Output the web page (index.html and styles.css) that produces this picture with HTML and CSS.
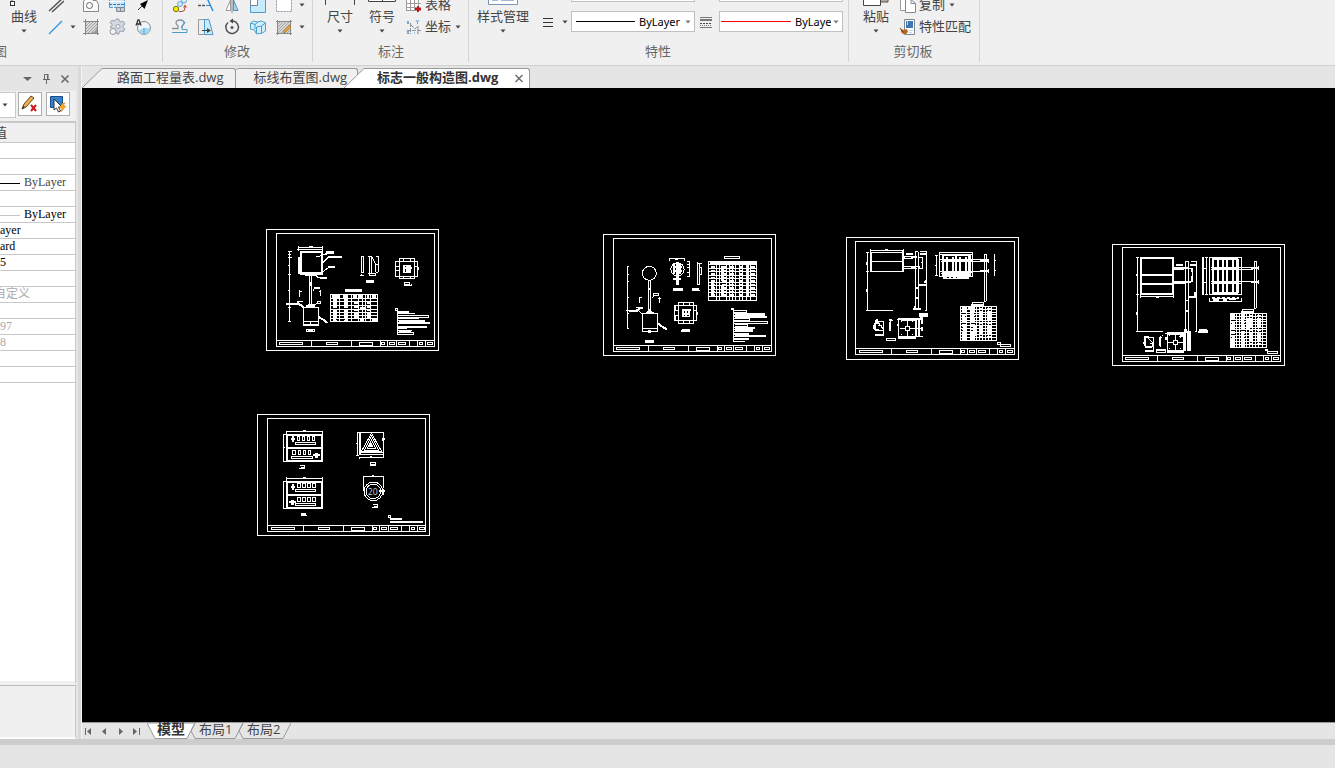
FILE: index.html
```html
<!DOCTYPE html>
<html lang="zh-CN">
<head>
  <meta charset="UTF-8" />
  <meta name="viewport" content="width=device-width, initial-scale=1.0"/>
  <title>标志一般构造图.dwg</title>
  <link rel="stylesheet" href="styles.css">
</head>
<body>
  <!-- shared symbols -->
  <svg class="defs" width="0" height="0" aria-hidden="true">
    <symbol id="caret" viewBox="0 0 10 10"><path d="M2.5 3.5h5L5 6.5z" fill="currentColor"/></symbol>
    <symbol id="title-block" viewBox="18 21 519 366">
      <path d="M49 355.5H523M154.5 355V373M274.5 355V373M361.5 355V373M382.5 355V373M409.5 355V373M448.5 355V373M472.5 355V373M496.5 355V373"/>
      <path d="M58.5 361.5h69v6h-69zM199.5 361.5h33v6h-33zM298.5 361.5h39v9h-39zM364.5 361.5h9v6h-9zM388.5 361.5h15v6h-15zM415.5 361.5h21v6h-21zM478.5 361.5h9v6h-9zM502.5 361.5h15v6h-15z"/>
    </symbol>
    <pattern id="hatch" width="3" height="3" patternUnits="userSpaceOnUse"><rect width="3" height="3" fill="#d8d8d8"/><path d="M0 3L3 0" stroke="#a4a4a4"/></pattern>
  </svg>

  <header class="ribbon">
    <section class="group group-draw">
      <div class="tools">
        <button class="big">
          <svg class="icon-big" viewBox="0 0 32 32"><path d="M4 12v14" stroke="#555"/><rect x="2.5" y="26.5" width="4" height="4" fill="#fff" stroke="#333"/></svg>
          <span>曲线</span>
          <svg class="caret"><use href="#caret"/></svg>
        </button>
        <div class="icon-grid draw-grid">
          <button class="cell" aria-label="多线"><svg class="icon" viewBox="0 0 18 18"><path d="M3 15L17 2M6 16L18 5" stroke="#555" stroke-width="1.5"/></svg></button>
          <span></span>
          <button class="cell" aria-label="面域"><svg class="icon" viewBox="0 0 18 18"><path d="M1.5 15.5V5L7 .5l4 4h3.5l2 4v7z" fill="#fafafa" stroke="#888"/><circle cx="7.5" cy="9.5" r="3" fill="#fff" stroke="#666"/></svg></button>
          <button class="cell" aria-label="图层块"><svg class="icon" viewBox="0 0 18 18"><path d="M1.5 1.5h15v10h-15z" fill="#cfe5f5" stroke="#5b9bcb"/><path d="M1 5.5h16M5.5 1v11" stroke="#fff"/><path d="M1 8.5h16" stroke="#2c7fc4" stroke-dasharray="3 1"/><path d="M8.5 11.5h8v4h-8z" fill="#c9ccd2" stroke="#818894"/><path d="M12.5 11v5" stroke="#818894"/></svg></button>
          <button class="cell" aria-label="箭头"><svg class="icon" viewBox="0 0 18 18"><path d="M4 14l5-5" stroke="#333"/><path d="M14 4L6 8l4.5 5z" fill="#000"/></svg></button>
          <button class="cell" aria-label="构造线"><svg class="icon" viewBox="0 0 18 18"><path d="M3 16L16 3" stroke="#2797e2" stroke-width="1.3"/></svg></button>
          <button class="drop" aria-label="更多构造线"><svg class="caret"><use href="#caret"/></svg></button>
          <button class="cell" aria-label="填充"><svg class="icon" viewBox="0 0 18 18"><rect x="4" y="4" width="11" height="11" fill="url(#hatch)"/><path d="M1 3.5h16M1 15.5h16M3.5 1v16M15.5 1v16" stroke="#888"/><path d="M15 9q-1 5-6 6h6z" fill="#999"/></svg></button>
          <button class="cell" aria-label="块">
            <svg class="icon" viewBox="0 0 18 18"><path d="M8 1h3v2l2 1 2-1 2 3-2 1.5v2l2 1.5-2 3-2-1-2 1v2H9L7 12 2 9l2-1.5V6L2 4.5 4 2l2 1 2-1z" fill="#d3d7df" stroke="#9ba1ac"/><circle cx="10" cy="8.5" r="2" fill="#f5f5f5" stroke="#9ba1ac"/><circle cx="5" cy="13.5" r="3" fill="#f5f5f5" stroke="#8f97a5"/></svg>
          </button>
          <button class="cell" aria-label="注释圆"><svg class="icon" viewBox="0 0 18 18"><circle cx="10" cy="10" r="6.5" fill="#eef6fb" stroke="#888"/><path d="M10 10h6.5q-1 6-6.5 6.5-4-.5-5.500-4z" fill="#a7d8f2"/><path d="M10 10v6" stroke="#5f9dc0"/><path d="M2 7.5L4 2h1l2 5.5M3 6h3" stroke="#333" stroke-width="1.3"/></svg></button>
        </div>
      </div>
      <h2 class="caption">图</h2>
    </section>

    <section class="group group-modify">
      <div class="tools">
        <div class="icon-grid modify-grid">
          <button class="cell" aria-label="复制对象"><svg class="icon" viewBox="0 0 18 18"><circle cx="5" cy="13" r="2.7" fill="#ffe600" stroke="#777a22"/><circle cx="9" cy="8" r="2.5" fill="#d6edf9" stroke="#5fa7d5"/><circle cx="13" cy="4.5" r="2.5" fill="#d6edf9" stroke="#5fa7d5"/><path d="M8 15.5h3q3 0 3-4" stroke="#a94f3b"/><path d="M12 11.5l2-3 2 3z" fill="#d6412d"/></svg></button>
          <button class="cell" aria-label="修剪"><svg class="icon" viewBox="0 0 18 18"><path d="M10 2l6 13" stroke="#2988d4" stroke-width="1.4"/><path d="M1 9.5h3m1 0h3" stroke="#555" stroke-width="1.5"/><path d="M9 9.5h4" stroke="#2988d4"/></svg></button>
          <button class="cell" aria-label="镜像"><svg class="icon" viewBox="0 0 18 18"><path d="M3 14.5L7.5 4v10.5z" fill="#fff" stroke="#999"/><path d="M15 14.5L10.5 4v10.5z" fill="#a7d8f2" stroke="#478fbe"/><path d="M9 1v16" stroke="#888"/></svg></button>
          <button class="cell" aria-label="缩放"><svg class="icon" viewBox="0 0 18 18"><path d="M1.5 1.5h15v15h-15z" fill="#c8eafb" stroke="#4c9ccc"/><path d="M1.5 2.5h7v7h-7z" fill="#fff" stroke="#7b8491"/></svg></button>
          <button class="cell" aria-label="拉伸"><svg class="icon" viewBox="0 0 18 18"><path d="M1.5.5h15v15h-15z" fill="#fff" stroke="#8a97a3" stroke-dasharray="2 1"/></svg></button>
          <button class="drop" aria-label="更多拉伸"><svg class="caret"><use href="#caret"/></svg></button>
          <button class="cell" aria-label="偏移"><svg class="icon" viewBox="0 0 18 18"><path d="M1 10.5h6V8Q5 6 5 5q0-3 4-3t4 3q0 1-2 3v2" stroke="#8794a2" stroke-width="1.3"/><path d="M1 14.5h15v-3h-5V8q3-2 3-4" stroke="#4c9ccc"/></svg></button>
          <button class="cell" aria-label="拉长"><svg class="icon" viewBox="0 0 18 18"><path d="M1.5 1.5h6v15h-6z" fill="#ededed" stroke="#999"/><path d="M7.5 1.5H12l4 15H7.5z" fill="#c8eafb" stroke="#4c9ccc"/><path d="M5 12.5h7" stroke="#444"/><path d="M10 10l4 2.5-4 2.5z" fill="#444"/></svg></button>
          <button class="cell" aria-label="旋转"><svg class="icon" viewBox="0 0 18 18"><path d="M5 4.5a6.3 6.3 0 1 0 5-1.500" stroke="#4e535a" stroke-width="1.5"/><path d="M10 .5v5L6.5 3z" fill="#444"/><circle cx="9" cy="9.5" r="1.5" fill="#555"/></svg></button>
          <button class="cell" aria-label="阵列"><svg class="icon" viewBox="0 0 18 18"><path d="M1.5 5l3-2 4 1 4-1 4 2v8l-3 2-6 1-2-4-4-1z" fill="#d4effc" stroke="#4c9ccc"/><path d="M2 5l4 1.5L9 4M6 6v5M7.5 9l5-1 4-3M12.5 8v7M7.5 9v6" stroke="#4c9ccc"/></svg></button>
          <button class="cell" aria-label="编辑填充"><svg class="icon" viewBox="0 0 18 18"><rect x="3" y="4" width="12" height="11" fill="url(#hatch)"/><path d="M1 3.5h16M1 15.5h16M2.5 2v15M15.5 2v15" stroke="#888"/><path d="M9 13l5-6 2 2-5 5-3 1z" fill="#e5a13a" stroke="#946728" stroke-width=".5"/></svg></button>
          <button class="drop" aria-label="更多填充"><svg class="caret"><use href="#caret"/></svg></button>
        </div>
      </div>
      <h2 class="caption">修改</h2>
    </section>

    <section class="group group-annotate">
      <div class="tools">
        <button class="big">
          <svg class="icon-big" viewBox="0 0 32 32"><path d="M1.5 30V20M30.5 30V20M1 24.5h30" stroke="#444"/></svg>
          <span>尺寸</span>
          <svg class="caret"><use href="#caret"/></svg>
        </button>
        <button class="big">
          <svg class="icon-big" viewBox="0 0 32 32"><path d="M2.5 12.5h27v14h-27zM16.5 12v14" fill="#fff" stroke="#444"/></svg>
          <span>符号</span>
          <svg class="caret"><use href="#caret"/></svg>
        </button>
        <div class="stack">
          <button class="small">
            <svg class="icon" viewBox="0 0 18 18"><path d="M1.5 2.5h14v12h-14z" fill="#fff"/><path d="M1.5 2v13M5.5 2v13M9.5 2v13M13.5 2v13M1 3.5h15M1 7.5h15M1 11.5h15M1 14.5h15" stroke="#a09a9a"/><path d="M13 10v6M10 13h6" stroke="#c51919" stroke-width="2"/></svg>
            <span>表格</span>
          </button>
          <button class="small">
            <svg class="icon" viewBox="0 0 18 18"><path d="M5.5 5v11M2 12.5h14M6 7l4 4 3-3v8" stroke="#8d959c" stroke-dasharray="4 1"/><path d="M2 3l2 3M4 3L2 6M11 2l1.5 2L14 2m-1.5 2v2M2 13l2 3M4 13l-2 3M9 15h1m2 0h1" stroke="#5fa1d6"/></svg>
            <span>坐标</span>
            <svg class="caret"><use href="#caret"/></svg>
          </button>
        </div>
      </div>
      <h2 class="caption">标注</h2>
    </section>

    <section class="group group-props">
      <div class="tools">
        <button class="big wide">
          <svg class="icon-big" viewBox="0 0 32 32"><path d="M1.5 8.5h29v21h-29z" fill="#fff" stroke="#7b94b5"/><path d="M5 24.5h6M14 24.5h13" stroke="#a9b8d2" stroke-width="3"/></svg>
          <span>样式管理</span>
          <svg class="caret"><use href="#caret"/></svg>
        </button>
        <button class="linetype" aria-label="线型">
          <svg class="icon" viewBox="0 0 18 18"><path d="M4 5.5h10M4 9.5h10M4 13.5h10" stroke="#333"/></svg>
          <svg class="caret"><use href="#caret"/></svg>
        </button>
        <div class="combos">
          <div class="combo"></div>
          <div class="combo">
            <span class="sample"></span>
            <select aria-label="线型选择"><option>ByLayer</option></select>
            <svg class="caret"><use href="#caret"/></svg>
          </div>
        </div>
        <button class="lineweight" aria-label="线宽">
          <svg class="icon" viewBox="0 0 18 18"><path d="M3 4.5h12M3 14.5h12" stroke="#777"/><path d="M3 7h12" stroke="#777" stroke-width="2"/><path d="M3 10.5h12" stroke="#444" stroke-dasharray="2 1"/><path d="M3 12.5h12" stroke="#777" stroke-dasharray="1 1"/></svg>
        </button>
        <div class="combos">
          <div class="combo"></div>
          <div class="combo">
            <span class="sample red"></span>
            <select aria-label="颜色选择"><option>ByLayer</option></select>
            <svg class="caret"><use href="#caret"/></svg>
          </div>
        </div>
      </div>
      <h2 class="caption">特性</h2>
    </section>

    <section class="group group-clip">
      <div class="tools">
        <button class="big">
          <svg class="icon-big" viewBox="0 0 32 32"><path d="M20 12h8v15h-8z" fill="#bba997" stroke="#555"/><path d="M3.5 12.5h17v18h-17z" fill="#fff" stroke="#444"/></svg>
          <span>粘贴</span>
          <svg class="caret"><use href="#caret"/></svg>
        </button>
        <div class="stack">
          <button class="small">
            <svg class="icon" viewBox="0 0 18 18"><path d="M1.5.5h7l3 3v11h-10z" fill="#fff" stroke="#999"/><path d="M6.5 3.5H12l4.5 4v9h-10z" fill="#fff" stroke="#888"/><path d="M12 3.5v4h4.5" stroke="#888"/></svg>
            <span>复制</span>
            <svg class="caret"><use href="#caret"/></svg>
          </button>
          <button class="small">
            <svg class="icon" viewBox="0 0 18 18"><path d="M5.5 1.5h10v15h-10z" fill="#fff" stroke="#7c8794"/><rect x="7" y="3" width="7" height="7" fill="#3f77ae"/><path d="M8.5 3v4M10 12.5h4M10 14.5h3" stroke="#bcd2e6"/><path d="M2 11l3 1 3-1 1 3-2 2-3 0-2-2z" fill="#b5671c"/><path d="M1 10l3 4" stroke="#74401a"/></svg>
            <span>特性匹配</span>
          </button>
        </div>
      </div>
      <h2 class="caption">剪切板</h2>
    </section>
  </header>

  <main class="workspace">
    <aside class="panel">
      <div class="panel-head">
        <button aria-label="菜单"><svg class="mini" viewBox="0 0 12 12"><path d="M2 4h9L6.5 8z" fill="#666"/></svg></button>
        <button aria-label="固定"><svg class="mini" viewBox="0 0 12 12"><path d="M4.5 6V1.5h3V6M8 1v5M3 6.5h7M6.5 7v4" stroke="#666"/></svg></button>
        <button aria-label="关闭"><svg class="mini" viewBox="0 0 12 12"><path d="M2.5 2.5l7 7M9.5 2.5l-7 7" stroke="#666" stroke-width="1.5"/></svg></button>
      </div>
      <div class="panel-tools">
        <button class="pick" aria-label="选择对象"><svg class="caret"><use href="#caret"/></svg></button>
        <button class="tool" aria-label="取消选择">
          <svg viewBox="0 0 22 22"><path d="M3 16L5 11 12 3l3 2-8 9z" fill="#f0b04c" stroke="#614520"/><path d="M3 16l1-3 2 1z" fill="#333"/><path d="M12 12l5 6M17 12l-5 6" stroke="#d0181e" stroke-width="2"/></svg>
        </button>
        <button class="tool" aria-label="快速选择">
          <svg viewBox="0 0 22 22"><path d="M3.5 3.5h12v11h-12z" fill="#2f82ce" stroke="#1d4c83"/><path d="M7 6v11l2.5-2 2 4 2-1-2-4H15z" fill="#fff" stroke="#333"/><path d="M16 10l-4 5h3l-1 4 5-6h-3l2-3z" fill="#ffac24" stroke="#d8720b" stroke-width=".5"/></svg>
        </button>
      </div>
      <table class="props">
        <thead><tr><th>值</th></tr></thead>
        <tbody>
          <tr><td></td></tr>
          <tr><td></td></tr>
          <tr><td class="dim"><span class="rule"></span>ByLayer</td></tr>
          <tr><td></td></tr>
          <tr><td><span class="rule light"></span>ByLayer</td></tr>
          <tr><td>ayer</td></tr>
          <tr><td>ard</td></tr>
          <tr><td>5</td></tr>
          <tr><td></td></tr>
          <tr><td class="off cut">自定义</td></tr>
          <tr><td></td></tr>
          <tr><td class="off">97</td></tr>
          <tr><td class="off">8</td></tr>
          <tr><td></td></tr>
          <tr><td></td></tr>
        </tbody>
      </table>
      <div class="props-space"></div>
      <div class="props-help"></div>
    </aside>

    <section class="document">
      <nav class="file-tabs">
        <button class="file-tab first"><svg class="slant" viewBox="0 0 20 20"><path d="M0 20L20 .5V20z" fill="#f0f0f0"/><path d="M0 20L20 .5" stroke="#999"/></svg><span>路面工程量表.dwg</span></button>
        <button class="file-tab second"><span>标线布置图.dwg</span></button>
        <div class="file-tab active"><svg class="slant" viewBox="0 0 20 20"><path d="M0 20L20 .5V20z" fill="#fff"/><path d="M0 20L20 .5" stroke="#999"/></svg><span>标志一般构造图.dwg<button class="close" aria-label="关闭标签"><svg class="mini" viewBox="0 0 12 12"><path d="M2.5 4l7 7M9.5 4l-7 7" stroke="#666" stroke-width="1.3"/></svg></button></span></div>
      </nav>

      <div class="canvas">
        <!-- single post, square sign -->
        <svg class="sheet sheet-1" viewBox="18 21 519 366">
          <path d="M19.5 22.5H535.5V385.5H19.5zM49.5 34.5H523.5V373.5H49.5z"/>
          <use href="#title-block" x="18" y="21" width="519" height="366"/>
          <path d="M88.5 88V298M84 88.5h12M84 97.5h9M84 106.5h12M84 130.5h6M84 157.5h9M84 205.5h6M84 255.5h9M84 298.5h9"/>
          <path d="M115.5 72V88M187.5 72V88M115 76.5h72M111 82.5h78M146 73.5h12"/>
          <path class="thick" d="M122 88V156H186V91H120M117 106V157M187 106V157M114 154h74"/>
          <path d="M135 160.5h36M147.5 157V250M154.5 157V250M169 103.5h9l12-6h12M196 94.5h27M199 88.5h21v4h-21zM189 121.5l15-15M190 148.5l15-12M168 163.5l15 5h18M159 205.5l6-9h12"/>
          <path class="thick" d="M205 105h40M204 135h20M184 168h16M163 198h16M150 180v12M144 249h15M147 253h16"/>
          <path d="M118.5 205V226M121 208h6M181.5 205V223M177 208h6M112 238.5h18M112 241h6M172 238.5h10v6h-10zM160 249l12-5"/>
          <path class="thick" d="M79 246h36l9 4 6 7M138 253h27M176 285l15 9 12 9"/>
          <path d="M130.5 256.5h45V310.5h-45zM130 298.5h45M130 307.5h45M151.5 298V309M139.5 322.5h24v6h-24zM145 325.5h14"/>
          <path d="M304.5 103.5h6v48h-6zM301 160.5h12M304 154.5v6M328.5 103V162M325 103.5h12M333.5 103V154M334 103l12 21v27M355.5 103V151M349 103.5h6M349 127h6M349 151h6M325 154.5h24M331 160.5h15v-6"/>
          <path class="fill" d="M318 174h24v9h-24zM255 201h51v9h-51z"/>
          <path d="M418.5 109.5h45V169.5h-45zM406.5 118.5h66V163.5h-66zM406 133.5h12M406 145.5h12M463 133.5h12M475.5 136v9M430 109v9M451 109v9M430 163v9M451 163v9M430.5 130.5h21v21h-21z"/>
          <path class="thick" d="M432 132v18M440 130v20M448 130v16M433 139h24M438 148h12"/>
          <path d="M433.5 181.5h15v6h-15zM433 190.5h22v-6"/>
          <path d="M211.5 217.5h141v81h-141zM211 229.5h141M211 238.5h141M211 250.5h141M211 262.5h141M211 271.5h141M211 280.5h141M211 289.5h141M238.5 217V298M274.5 217V298M295.5 217V298M307.5 217V298M316.5 217V298M331.5 217V298"/>
          <path class="bar" d="M216 223.5h20M250 223.5h14M280 223.5h12M298 223.5h12M322 223.5h6M337 223.5h12"/>
          <path class="bar dash" d="M223.5 232V298M256.5 232V298M286.5 239V292M325.5 239V292"/>
          <path class="bar" d="M222 265v33M258 262v34M300 259h14M300 294h12M336 294h15"/>
          <path d="M406.5 259.5h6v6h-6zM412.5 265V336M412 268.5h36M412 274.5h54M412 280.5h94v6h-94zM412 289.5h66M412 295.5h84M412 301.5h97v4h-97zM412 313.5h90M412 319.5h30M412 325.5h45M412 331.5h48v6h-48z"/>
          <path class="thick" d="M415 270h33M416 297h78M412 304h96M415 315h87M416 328h38"/>
        </svg>

        <!-- single post, round sign -->
        <svg class="sheet sheet-2" viewBox="18 21 519 366">
          <path d="M19.5 22.5H535.5V385.5H19.5zM49.5 34.5H523.5V373.5H49.5z"/>
          <use href="#title-block" x="18" y="21" width="519" height="366"/>
          <path d="M91.5 118V304M91 118.5h6M91 142.5h4M91 163.5h6M91 211.5h4M91 259.5h6M91 304.5h6"/>
          <circle cx="157" cy="139" r="21"/>
          <path d="M153.5 160V251M160.5 160V251M166 211.5l6-6M169.5 199.5h15v6h-15zM127.5 211V229M127 212h7M187.5 211V229M184 214h7M118 241.5h18M118 247h6M88 250.5h36l12 12M147 256.5h24"/>
          <path class="thick" d="M147 259h24M150 254h15M157 247v9M157 184v6M182 289l12 9 15 9M97 252h24l6-8h10"/>
          <path d="M136.5 259.5h45V313.5h-45zM136 304.5h45M154.5 310.5h6v6h-6z"/>
          <path class="fill" d="M144 339h27v9h-27zM228 183h30v9h-30zM285 183h21l3 9h-24z"/>
          <path d="M217.5 94V103M262.5 94V103M217 94.5h46M235 97.5h9"/>
          <circle cx="241.5" cy="127" r="20"/>
          <path class="thick" d="M230 120h24M229 132h25M232 108v34M250 108v34M228 157h24"/>
          <path class="bar" d="M241 109v64"/>
          <path d="M271 103.5h7M277.5 103V151M271 112.5h7M271 121.5h7M271 136.5h7M271 148.5h7M301.5 103.5V171.5M307.5 109V171M301 109.5h15M307 121.5h6v21h-6M301 172.5h9"/>
          <path d="M244.5 226.5h45V289.5h-45zM232.5 235.5h66V280.5h-66zM232 250h12M232 266h12M235 238v12M235 268v12M289 250h12M300.5 256v9M259 226v9M277 226v9M259 280v9M277 280v9M256.5 247.5h21v21h-21z"/>
          <path class="thick" d="M258 249v18M267 247v22M275 247v18M258 250h24M258 260h18"/>
          <path class="fill" d="M255 306h24v9h-27z"/>
          <path d="M382.5 88.5h45v6h-45z"/>
          <path d="M334.5 103.5h144v117h-144zM334 112.5h144M334 124.5h144M334 133.5h144M334 145.5h144M334 154.5h144M334 166.5h144M334 175.5h144M334 187.5h144M334 196.5h144M334 208.5h144M358.5 103V220M367.5 103V220M388.5 103V220M397.5 103V220M406.5 103V220M415.5 103V220M427.5 103V220M436.5 103V220M448.5 103V220M460.5 103V220"/>
          <path class="bar dash" d="M346.5 109V210M379.5 109V210M403.5 109V206M430.5 109V206M468 109V206"/>
          <path class="bar" d="M345 160v48M376 118v44M376 178v30M451 112v94M340 106.5h138"/>
          <path class="fill" d="M402 243h9v6h-9z"/>
          <path d="M409.5 244V346M409 250.5h39v6h-39M409 259.5h93v6h-93M409 268.5h98M409 274.5h48v6h-48M409 283.5h102v6h-102M415 292.5h36v6h-36M409 301.5h66M409 307.5h57v6h-57M409 319.5h45v4h-45M409 328.5h96M409 334.5h45v3h-45M409 343.5h36"/>
          <path class="thick" d="M415 262h87M415 270h95M414 303h60M415 312h50M415 327h91"/>
        </svg>

        <!-- cantilever sign, two arms -->
        <svg class="sheet sheet-3" viewBox="18 21 519 369">
          <path d="M19.5 22.5H535.5V388.5H19.5zM46.5 34.5H523.5V373.5H46.5z"/>
          <use href="#title-block" x="18" y="21" width="519" height="366"/>
          <path d="M91.5 58V124.5H190.5V58M91 61.5h99M94.5 66V122M187.5 64V124M91 67.5h99M136 58.5h8M91 94.5h99"/>
          <path d="M82.5 67V241M78 67.5h9M79 97v8M78 124.5h9M79 178v8M79 241.5h80"/>
          <path d="M190 79.5h40M190 85.5h28M190 109.5h50M190 115.5h40M226.5 64V240M235.5 67V240M259.5 64V240M226 64.5h9M241 64.5h18M235 82.5h12v33h-9M243 97h6M235 163.5h24M255 151v9"/>
          <path class="thick" d="M198 72h20M213 82h17M213 112h15M240 72h18M238 165h20M229 205h8M220 238h22M223 232h6M232 172v4M256 153v6M193 79v8M237 108v8"/>
          <path d="M256 241.5h5"/>
          <path class="fill" d="M237 249h27v12h-27zM241 262h8v6h-8z"/>
          <path d="M298.5 67.5h99v72h-99zM298 73.5h99M306.5 73V138M310 73v66M391 73v66M289.5 76V136M285 76.5h9M285 106h6M285 136.5h9M298 88.5h150M304 94.5h125M298 124.5h150M304 130.5h90M310 145.5h76"/>
          <path class="thick" d="M310 73v62M322 80v56M338 80v56M347 73v65M361 80v56M377 80v56M388 73v65M309 76h78M309 134h78M307 91h90M307 125h90M310 143h10M326 143h8M340 143h8M352 143h34M421 92h26M421 123h26"/>
          <path d="M433.5 73V214M439.5 73V214M433 73.5h6M433 214.5h6M445.5 87v12M445.5 117v12M463.5 73V139M463 91h6M463 121h6M397.5 222v-6h33v6"/>
          <path class="fill" d="M394 222h37v6h-37z"/>
          <path d="M361.5 229.5h108v102h-108zM361 238.5h108M361 247.5h108M361 253.5h108M361 262.5h108M361 271.5h108M361 277.5h108M361 286.5h108M361 295.5h108M361 304.5h108M361 313.5h108M361 322.5h108M379.5 229V331M391.5 229V331M409.5 229V331M418.5 229V331M427.5 229V331M436.5 229V331M445.5 229V331M454.5 229V331"/>
          <path class="bar dash" d="M371 230V331M400 230V331M422 233V328M448 233V328"/>
          <path class="bar" d="M370 255v18M372 284v20M396 230v36M402 285v34M384 234h18"/>
          <path d="M103.5 271.5h9v-4M106.5 271V304M112 274.5h18v27h-18M130.5 274V319M112 274l18 24M115 286h12M151.5 268V300M146 271.5h13M139.5 325.5h27v7h-27z"/>
          <path class="thick" d="M102 286v12M106 280v20M105 316h25M106 301h12M112 268v14M151 276v26M146 270h10"/>
          <path d="M175.5 265.5h51v60h-51zM181.5 271.5h45v48h-45M202.5 268V324M181 295.5h45M172 268.5h6M229 268.5h20M229 295.5h18M229 319.5h20"/>
          <circle cx="202.5" cy="295.5" r="7" class="solid"/>
          <path class="thick" d="M175 267h74M229 268v54M238 268v54M246 268v15M245 290v12M175 322h52M170 285h7"/>
          <path d="M184 274h3M217 274h3M184 313h3M217 313h3M472.5 337.5h9v6h-9zM481.5 343.5h30v5h-30z"/>
        </svg>

        <!-- cantilever sign, tall board -->
        <svg class="sheet sheet-4" viewBox="18 21 519 366">
          <path d="M19.5 22.5H535.5V385.5H19.5zM49.5 31.5H523.5V373.5H49.5z"/>
          <use href="#title-block" x="18" y="21" width="519" height="366"/>
          <path class="thick" d="M105 63H201V171H105zM105 114h96M105 141h96"/>
          <path d="M94.5 61V283M90 61.5h9M91 112v5M90 171.5h9M91 225v9M91 283.5h80M103.5 174V183M202.5 174V183M103 178.5h99M150 181.5h9"/>
          <path d="M204 91.5h26M204 97.5h30M204 133.5h30M204 138.5h36M238.5 73V285M247.5 73V285M238 73.5h9M271.5 73V283M255 73.5h16M247 94.5h12v40h-9M247 180.5h24M267 283.5h6"/>
          <path class="thick" d="M210 84h21M222 92h28M205 93h25M232 136h23M205 135h25M252 84h18M268 165v12M244 188v4M248 181h22M240 222h8M233 285h20M235 280h8M229 288h12M258 95v10M258 117v15"/>
          <path class="fill" d="M279 276h24l3 6v6h-30v-6h3z"/>
          <path d="M310.5 61.5h96v111h-96zM297 61.5h9M297 172.5h9M301.5 61V172M295 94h6M295 136h6M319.5 67h78v100h-78zM316 91.5h130M316 96.5h125M316 133.5h130M316 138.5h90M310.5 184v9h96v-9M319 181.5h9M334 181.5h9M349 181.5h9M364 181.5h9M379 181.5h9M394 181.5h3v4h-78"/>
          <path class="thick" d="M291 61V174M322 64v106M336 70v96M352 64v106M363 64v106M381 70v96M394 64v106M319 67h78M319 167h78M319 94h78M319 135h78M322 188h18M352 188h12M369 187h22M434 93h25M434 135h25"/>
          <path d="M445.5 73V214M451.5 73V214M445 73.5h6M445 214.5h6M457.5 87v12M457.5 129v12M409.5 222v-6h33v6"/>
          <path class="fill" d="M405 222h38v6h-38z"/>
          <path d="M373.5 229.5h108v102h-108zM373 238.5h108M373 247.5h108M373 253.5h108M373 262.5h108M373 271.5h108M373 277.5h108M373 286.5h108M373 295.5h108M373 304.5h108M373 313.5h108M373 322.5h108M391.5 229V331M400.5 229V331M421.5 229V331M430.5 229V331M439.5 229V331M448.5 229V331M457.5 229V331M469.5 229V331"/>
          <path class="bar dash" d="M382 230V331M412 230V331M434 233V328M460 233V328"/>
          <path class="bar" d="M409 234v35M410 290v36M383 255v8M383 295v8M424 243v32"/>
          <path d="M115.5 298v30M115 301.5h28v18h-10M142.5 301V346M124 301l18 18M118 328.5h22v-9M163.5 298V330M159 301.5h9M168 295h3M151.5 337.5h27v9h-27zM154 340.5h22"/>
          <path class="thick" d="M117 300h12M117 300v26M115 315v6M118 330h20M117 342h26M162 300v28"/>
          <path d="M184.5 289.5h48v57h-48zM184 292.5h48M208.5 292V342M184 316.5h48M177 289.5h6v18h-6M184 340.5h48M190 295h3M223 295h3M190 334h3M223 334h3"/>
          <circle cx="208.5" cy="316.5" r="7" class="solid"/>
          <path class="thick" d="M184 288h50M177 304h10M184 345h48M237 285v58M247 283v60M253 283v58M205 343h10M222 301l12-10"/>
          <path d="M477.5 337.5h6v4h-6zM484.5 343.5h30v6h-30z"/>
        </svg>

        <!-- sign faces -->
        <svg class="sheet sheet-5" viewBox="21 18 519 366">
          <path d="M22.5 19.5H538.5V382.5H22.5zM52.5 31.5H526.5V370.5H52.5z"/>
          <use href="#title-block" x="24" y="18" width="519" height="366"/>
          <path d="M109.5 70V160M217.5 70V160M109 70.5h108M159 67.5h9M100.5 79V160M100 79.5h18M99 118h6M100 160.5h12"/>
          <path class="thick" d="M112 81H216V159H112zM112 120h104"/>
          <path d="M141.5 85.5h8v12h-8zM156.5 85.5h8v12h-8zM171.5 85.5h8v12h-8zM186.5 85.5h8v12h-8zM135.5 103.5h61v6h-61zM127.5 127.5h9v12h-9zM144.5 127.5h8v12h-8zM159.5 127.5h8v12h-8zM174.5 127.5h8v12h-8zM124.5 145.5h64v6h-64z"/>
          <path class="thick" d="M124 92h12M130 85v18M189 142h21M194 138h10M194 147h10"/>
          <path d="M150.5 172.5h13v8h-16M153 177h9"/>
          <path d="M109.5 208V300M217.5 208V300M109 211.5h108M159 208.5h9M100.5 220V300M100 220.5h18M99 258h4M100 300.5h12"/>
          <path class="thick" d="M112 222H216V300H112zM112 261h104"/>
          <path d="M141.5 226.5h9v12h-9zM157.5 226.5h8v12h-8zM172.5 226.5h8v12h-8zM187.5 226.5h8v12h-8zM135.5 244.5h61v6h-61zM141.5 268.5h9v12h-9zM157.5 268.5h8v12h-8zM172.5 268.5h8v12h-8zM187.5 268.5h8v12h-8zM135.5 286.5h61v6h-61z"/>
          <path class="thick" d="M124 238h12M130 228v18M117 283h20M122 279h10M122 288h10"/>
          <path class="fill" d="M153 315h15l3 9h-18zM420 330h36v6h-36zM420 339h99v6h-99z"/>
          <path d="M322.5 73V142M322 73.5h9M319 106h4M328 73.5h73V151M331.5 73V139M328 139.5h73M334 133.5h66M328 145.5v6M328 148.5h73M360 145.5h6M319 142.5h9"/>
          <path class="thick" d="M329 76v62M396 94h9M400 90v9"/>
          <path d="M364.5 76L334 130.5h61zM364.5 84L343 126.5h43zM364.5 95L352 120.5h25z"/>
          <path class="thick" d="M364 104v14M357 115h12"/>
          <path d="M361.5 163.5h15v9h-15zM364 168.5h10M340.5 205V250M400.5 205V240M340 205.5h60M366 202.5h6"/>
          <circle cx="370" cy="250" r="28"/>
          <circle cx="370" cy="250" r="22"/>
          <path class="thick" d="M388 250h16M400 242v18M342 240v10"/>
          <text x="368" y="262" text-anchor="middle">20</text>
          <path d="M369.5 289.5h13v9h-16M372 294h10M415.5 322.5h6v6h-6z"/>
        </svg>
      </div>

      <nav class="layout-bar">
        <div class="steps">
          <button aria-label="第一个"><svg viewBox="0 0 16 16"><path d="M3 5v7h1V5zM9 5v7L5 8.5z" fill="#666"/></svg></button>
          <button aria-label="上一个"><svg viewBox="0 0 16 16"><path d="M8 5v7L4 8.5z" fill="#666"/></svg></button>
          <button aria-label="下一个"><svg viewBox="0 0 16 16"><path d="M5 5v7l4-3.5z" fill="#666"/></svg></button>
          <button aria-label="最后一个"><svg viewBox="0 0 16 16"><path d="M3 5v7l4-3.5zM9 5v7h1V5z" fill="#666"/></svg></button>
        </div>
        <button class="layout-tab current"><svg viewBox="0 0 48 17"><path d="M0 0l8 15.5h32L48 0z" fill="#fff" stroke="#999"/></svg><span>模型</span></button>
        <button class="layout-tab"><svg viewBox="0 0 52 17"><path d="M4 0L0 8l4 7.5h40L52 0" stroke="#999"/></svg><span>布局1</span></button>
        <button class="layout-tab"><svg viewBox="0 0 52 17"><path d="M4 0L0 8l4 7.5h40L52 0" stroke="#999"/></svg><span>布局2</span></button>
      </nav>
    </section>
  </main>

  <footer class="status"></footer>
</body>
</html>
```
FILE: styles.css
```css
* {
  margin: 0;
  padding: 0;
  box-sizing: border-box;
}

body {
  height: 100vh;
  display: flex;
  flex-direction: column;
  overflow: hidden;
  background: #e5e5e5;
  color: #444;
  font-family: "Open Sans", "Noto Sans CJK SC", sans-serif;
  font-size: 13px;
  line-height: 16px;
}

button,
select {
  border: none;
  background: none;
  color: inherit;
  font: inherit;
}

svg {
  display: block;
  fill: none;
}

.defs {
  position: absolute;
}

/* ribbon */

.ribbon {
  display: flex;
  height: 66px;
  flex-shrink: 0;
  padding-bottom: 3px;
  background: #f0f0f0;
  border-bottom: 1px solid #d0d0d0;
}

.group {
  display: flex;
  flex-direction: column;
  justify-content: flex-end;
  flex-shrink: 0;
  overflow: hidden;
  border-right: 1px solid #d4d4d4;
}

.group-draw {
  padding: 0 6px;
}

.group-modify {
  padding: 0 5px 0 4px;
}

.group-annotate {
  padding: 0 5px 0 6px;
}

.group-props {
  padding: 0 5px 0 4px;
}

.group-clip {
  padding: 0 8px 0 6px;
}

.tools {
  display: flex;
  align-items: flex-end;
}

.caption {
  flex-shrink: 0;
  height: 20px;
  margin-top: 4px;
  color: #666;
  font-size: 13px;
  font-weight: normal;
  line-height: 19px;
  text-align: center;
}

.group-draw .caption {
  margin-left: -12px;
  text-align: left;
}

.icon {
  width: 18px;
  height: 18px;
  flex-shrink: 0;
}

.icon-big {
  width: 32px;
  height: 32px;
  margin-bottom: 1px;
}

.caret {
  width: 10px;
  height: 10px;
  flex-shrink: 0;
}

.big {
  display: flex;
  flex-direction: column;
  align-items: center;
  width: 42px;
  padding-bottom: 2px;
  white-space: nowrap;
}

.big span {
  padding-bottom: 2px;
}

.group-draw .big {
  width: 36px;
}

.big.wide {
  width: 60px;
}

.icon-grid {
  display: grid;
  grid-auto-rows: 22px;
}

.draw-grid {
  grid-template-columns: 26px 10px 26px 26px 26px;
}

.modify-grid {
  grid-template-columns: repeat(5, 26px) 10px;
}

.cell,
.drop {
  display: flex;
  align-items: center;
  justify-content: center;
}

.stack {
  display: flex;
  flex-direction: column;
  margin-left: 2px;
}

.small {
  display: flex;
  align-items: center;
  gap: 2px;
  height: 22px;
  white-space: nowrap;
}

.small span {
  padding-bottom: 2px;
}

.linetype,
.lineweight {
  display: flex;
  align-items: center;
  height: 22px;
  margin-bottom: 5px;
}

.linetype {
  gap: 3px;
  padding: 0 1px 0 6px;
}

.lineweight {
  padding: 0 4px 0 2px;
}

.combos {
  display: flex;
  flex-direction: column;
  gap: 9px;
  padding-bottom: 6px;
}

.combo {
  display: flex;
  align-items: center;
  width: 124px;
  height: 21px;
  padding: 0 1px 0 4px;
  background: #fff;
  border: 1px solid #c0c0c0;
}

.combo .sample {
  width: 59px;
  height: 1px;
  margin-right: 4px;
  background: #000;
}

.combo .sample.red {
  width: 70px;
  background: #f00;
  margin-left: -3px;
}

.combo .caret {
  color: #777;
}

.combo select {
  flex: 1;
  width: 0;
  min-width: 0;
  appearance: none;
  color: #000;
  font-family: "Noto Sans", sans-serif;
  font-size: 11px;
}

/* property panel */

.workspace {
  display: flex;
  flex: 1;
  min-height: 0;
}

.panel {
  display: flex;
  flex-direction: column;
  width: 82px;
  flex-shrink: 0;
  padding-right: 6px;
  background: linear-gradient(to left, #f5f5f5 1px, #d9d9d9 1px, #d9d9d9 4px, #e5e5e5 4px);
}

.panel-head {
  display: flex;
  justify-content: flex-end;
  align-items: center;
  gap: 7px;
  height: 25px;
  padding-right: 5px;
}

.mini {
  width: 12px;
  height: 12px;
}

.panel-tools {
  display: flex;
  align-items: flex-start;
  height: 30px;
  padding-top: 1px;
  background: #f0f0f0;
}

.pick {
  width: 16px;
  height: 26px;
  margin-right: 2px;
  background: #fff;
  border: 1px solid #c8c8c8;
  border-left: none;
}

.tool {
  width: 24px;
  height: 24px;
  margin-right: 4px;
  background: #fff;
  border: 1px solid #adadad;
}

.props {
  width: 100%;
  border-collapse: separate;
  border-spacing: 0;
  table-layout: fixed;
  background: #fff;
  border-top: 1px solid #c8c8c8;
  border-right: 1px solid #c8c8c8;
}

.props th,
.props td {
  height: 16px;
  overflow: hidden;
  border-bottom: 1px solid #c8c8c8;
  line-height: 15px;
  text-align: left;
  white-space: nowrap;
}

.props th {
  height: 21px;
  border-top: 1px solid #c8c8c8;
  background: #f0f0f0;
  font-weight: normal;
  text-indent: -6px;
}

.props td {
  color: #000;
  font-family: "Liberation Serif", "Noto Sans CJK SC", serif;
  font-size: 12px;
}

.props .dim {
  color: #444;
}

.props .off {
  color: #aaa;
}

.props .cut {
  text-indent: -6px;
}

.rule {
  display: inline-block;
  width: 20px;
  height: 1px;
  margin-right: 4px;
  background: #000;
  vertical-align: middle;
}

.rule.light {
  background: #c8c8c8;
}

.props-space {
  flex: 1;
  background: #fff;
  border-right: 1px solid #c8c8c8;
  border-bottom: 4px solid #f0f0f0;
}

.props-help {
  height: 54px;
  background: #f0f0f0;
  border-top: 1px solid #bbb;
  border-right: 1px solid #c8c8c8;
  border-bottom: 2px solid #fff;
}

/* drawing area */

.document {
  display: flex;
  flex: 1;
  flex-direction: column;
  min-width: 0;
}

.file-tabs {
  display: flex;
  align-items: flex-end;
  height: 22px;
}

.file-tab {
  display: flex;
  height: 20px;
  white-space: nowrap;
}

.file-tab > span {
  display: flex;
  align-items: center;
  height: 20px;
  padding: 0 11px 3px 15px;
  background: #f0f0f0;
  border-top: 1px solid #999;
  border-right: 1px solid #999;
  border-top-right-radius: 3px;
}

.file-tab.second > span {
  padding: 0 10px 3px 18px;
  border-top-left-radius: 3px;
}

.file-tab.active {
  margin-left: -14px;
  color: #333;
  font-weight: bold;
}

.file-tab.active > span {
  padding: 0 4px 3px 13px;
  background: #fff;
}

.slant {
  width: 20px;
  height: 20px;
}

.close {
  margin-left: 15px;
}

.canvas {
  position: relative;
  flex: 1;
  min-height: 0;
  overflow: hidden;
  background: #000;
}

.sheet {
  position: absolute;
  width: 173px;
  height: 122px;
  stroke: #fff;
  stroke-width: 3;
  shape-rendering: crispEdges;
}

.sheet-1 {
  left: 184px;
  top: 141px;
}

.sheet-2 {
  left: 521px;
  top: 146px;
}

.sheet-3 {
  left: 764px;
  top: 149px;
  height: 123px;
}

.sheet-4 {
  left: 1030px;
  top: 156px;
}

.sheet-5 {
  left: 175px;
  top: 326px;
}

.sheet .thick {
  stroke-width: 6;
}

.sheet .bar {
  stroke-width: 9;
}

.sheet .dash {
  stroke-width: 12;
  stroke-dasharray: 6 3 9 3;
}

.sheet .fill {
  fill: #fff;
  stroke: none;
}

.sheet .solid {
  fill: #000;
}

.sheet text {
  fill: #c9d3dc;
  stroke: none;
  font-size: 26px;
}

/* layout tabs */

.layout-bar {
  display: flex;
  height: 17px;
  border-top: 1px solid #999;
}

.steps {
  display: flex;
  width: 65px;
}

.steps svg {
  width: 16px;
  height: 16px;
}

.layout-tab {
  display: grid;
  height: 16px;
  margin-right: -4px;
  line-height: 12px;
}

.layout-tab svg,
.layout-tab span {
  grid-area: 1 / 1;
}

.layout-tab svg {
  width: 52px;
  height: 17px;
}

.layout-tab span {
  padding-left: 8px;
  text-align: left;
}

.layout-tab.current {
  color: #333;
  font-weight: bold;
}

.layout-tab.current svg {
  width: 48px;
}

.layout-tab.current span {
  padding: 0;
  text-align: center;
  font-size: 14px;
}

.status {
  height: 29px;
  flex-shrink: 0;
  border-top: 6px solid #cdcdcd;
}
```
